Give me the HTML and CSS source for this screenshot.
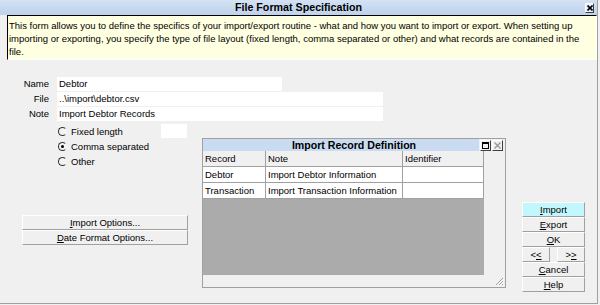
FILE: index.html
```html
<!DOCTYPE html>
<html>
<head>
<meta charset="utf-8">
<title>File Format Specification</title>
<link rel="stylesheet" href="styles.css">
</head>
<body>
<div class="window">
  <div class="titlebar">
    <span class="title">File Format Specification</span>
    <span class="tb-close"><svg width="6" height="6" viewBox="0 0 6 6"><path d="M0.5 0.5 L5.5 5.5 M5.5 0.5 L0.5 5.5" stroke="#000" stroke-width="1.6"/></svg></span>
  </div>
  <div class="info">This form allows you to define the specifics of your import/export routine - what and how you want to import or export. When setting up<br>importing or exporting, you specify the type of file layout (fixed length, comma separated or other) and what records are contained in the<br>file.</div>

  <div class="fields">
    <div class="frow"><span class="flabel">Name</span><span class="finput w-short">Debtor</span></div>
    <div class="frow"><span class="flabel">File</span><span class="finput w-long">..\import\debtor.csv</span></div>
    <div class="frow"><span class="flabel">Note</span><span class="finput w-long">Import Debtor Records</span></div>
  </div>

  <div class="lower">
    <div class="leftcol">
      <div class="radio-row"><span class="radio"><span class="rc"></span>Fixed length</span><span class="smallbox"></span></div>
      <div class="radio-row"><span class="radio"><span class="rc on"></span>Comma separated</span></div>
      <div class="radio-row"><span class="radio"><span class="rc"></span>Other</span></div>
      <div class="opt-btns">
        <div class="btn"><u>I</u>mport Options...</div>
        <div class="btn"><u>D</u>ate Format Options...</div>
      </div>
    </div>

    <div class="sub">
      <div class="sub-title">
        <span class="sub-name">Import Record Definition</span>
        <span class="sub-btns">
          <span class="sbox"><svg width="7" height="7" viewBox="0 0 7 7"><rect x="0.5" y="0.5" width="6" height="6" fill="none" stroke="#000" stroke-width="1"/><rect x="0" y="0" width="7" height="2" fill="#000"/></svg></span>
          <span class="sbox"><svg width="7" height="7" viewBox="0 0 7 7"><path d="M0.5 0.5 L6.5 6.5 M6.5 0.5 L0.5 6.5" stroke="#9a9a9a" stroke-width="1.4"/></svg></span>
        </span>
      </div>
      <div class="grid">
        <div class="grow head"><span class="cell">Record</span><span class="cell">Note</span><span class="cell">Identifier</span></div>
        <div class="grow"><span class="cell">Debtor</span><span class="cell">Import Debtor Information</span><span class="cell"></span></div>
        <div class="grow"><span class="cell">Transaction</span><span class="cell">Import Transaction Information</span><span class="cell"></span></div>
        <div class="gray"></div>
      </div>
      <div class="strip"><svg class="grip" width="9" height="9" viewBox="0 0 9 9"><path d="M8 1 L1 8 M8 4 L4 8 M8 7 L7 8" stroke="#a0a0a0" stroke-width="1"/><path d="M9 2 L2 9 M9 5 L5 9" stroke="#fff" stroke-width="1"/></svg></div>
    </div>

    <div class="rbtns">
      <div class="btn import"><u>I</u>mport</div>
      <div class="btn"><u>E</u>xport</div>
      <div class="btn"><u>O</u>K</div>
      <div class="navrow"><div class="btn nav">&lt;<u>&lt;</u></div><div class="btn nav">&gt;<u>&gt;</u></div></div>
      <div class="btn"><u>C</u>ancel</div>
      <div class="btn"><u>H</u>elp</div>
    </div>
  </div>
</div>
</body>
</html>
```

FILE: styles.css
```css
* { box-sizing: border-box; }
html, body { margin: 0; padding: 0; }
body {
  background: #f0f0f0;
  font-family: "Liberation Sans", Arial, sans-serif;
  font-size: 9.5px;
  color: #000;
  width: 600px;
  height: 305px;
  overflow: hidden;
}
.window {
  width: 598px;
  height: 304px;
  border-right: 1px solid #a0a0a0;
  border-bottom: 1px solid #a0a0a0;
  background: #f0f0f0;
}
.titlebar {
  height: 15px;
  display: grid;
  grid-template-columns: 1fr auto 1fr;
  align-items: center;
  background: linear-gradient(#d3e2f4, #bed2eb);
}
.title {
  grid-column: 2;
  font-weight: bold;
  font-size: 10.7px;
  line-height: 15px;
}
.tb-close {
  grid-column: 3;
  justify-self: end;
  margin-right: 3px;
  width: 9px;
  height: 10px;
  display: flex;
  align-items: center;
  justify-content: center;
  background: #e8eef6;
  border-top: 1px solid #fff;
  border-left: 1px solid #fff;
  border-right: 1px solid #404040;
  border-bottom: 1px solid #404040;
}
.info {
  margin-left: 7px;
  width: 590px;
  height: 45px;
  background: #ffffe1;
  border-top: 1px solid #000;
  border-left: 1px solid #000;
  border-right: 1px solid #fff;
  border-bottom: 1px solid #fff;
  padding: 3px 0 0 1px;
  line-height: 13px;
  white-space: nowrap;
}
.fields { margin-top: 17px; }
.frow { display: flex; height: 15px; }
.flabel { width: 49px; text-align: right; line-height: 14px; }
.finput {
  margin-left: 8px;
  height: 14px;
  background: #fff;
  line-height: 14px;
  padding-left: 2px;
}
.w-short { width: 225px; }
.w-long { width: 326px; }

.lower { display: flex; }
.leftcol { width: 202px; padding-top: 2px; }
.radio-row {
  display: grid;
  grid-template-columns: 103px 26px;
  height: 15px;
  padding-left: 58px;
  align-items: center;
}
.radio { display: flex; align-items: center; gap: 4px; line-height: 15px; }
.rc {
  width: 9px;
  height: 9px;
  border-radius: 50%;
  border: 1.5px solid #303030;
  border-right-color: #f4f4f4;
  background: #f4f4f4;
  position: relative;
}
.rc.on::after {
  content: "";
  position: absolute;
  left: 2px;
  top: 2px;
  width: 3px;
  height: 3px;
  border-radius: 50%;
  background: #000;
}
.smallbox {
  align-self: start;
  width: 26px;
  height: 14px;
  background: #fff;
}
.opt-btns { margin-left: 22px; margin-top: 46px; width: 166px; }
.btn {
  height: 15px;
  background: #f0f0f0;
  border: 1px solid;
  border-color: #fff #a0a0a0 #a0a0a0 #fff;
  text-align: center;
  line-height: 13px;
  white-space: nowrap;
}

.sub {
  margin-top: 16px;
  width: 304px;
  height: 150px;
  border: 1px solid #a0a0a0;
  display: flex;
  flex-direction: column;
}
.sub-title {
  height: 12px;
  display: grid;
  grid-template-columns: 1fr auto 1fr;
  align-items: start;
  background: linear-gradient(to right, #c9dbf0 276px, #f0f0f0 276px);
}
.sub-name {
  grid-column: 2;
  font-weight: bold;
  font-size: 10.6px;
  line-height: 12px;
}
.sub-btns {
  grid-column: 3;
  justify-self: end;
  display: flex;
  gap: 1px;
  margin-right: 2px;
  margin-top: 1px;
}
.sbox {
  width: 11px;
  height: 11px;
  display: flex;
  align-items: center;
  justify-content: center;
  background: #f0f0f0;
  border-top: 1px solid #fff;
  border-left: 1px solid #fff;
  border-right: 1px solid #404040;
  border-bottom: 1px solid #404040;
}
.grid { width: 281px; }
.grow {
  display: grid;
  grid-template-columns: 63px 137px 81px;
  height: 16px;
}
.cell {
  border-right: 1px solid #a0a0a0;
  border-bottom: 1px solid #a0a0a0;
  background: #fff;
  padding-left: 2px;
  line-height: 15px;
  white-space: nowrap;
  overflow: hidden;
}
.head .cell { background: #f0f0f0; }
.gray { height: 76px; background: #ababab; }
.strip {
  flex: 1;
  display: flex;
  justify-content: flex-end;
  align-items: flex-end;
}
.grip { display: block; margin: 0 1px 1px 0; }

.rbtns { margin-left: 16px; margin-top: 80px; width: 63px; }
.btn.import { background: #c2f7fd; }
.navrow { display: flex; justify-content: space-between; }
.btn.nav { width: 28px; }
```
